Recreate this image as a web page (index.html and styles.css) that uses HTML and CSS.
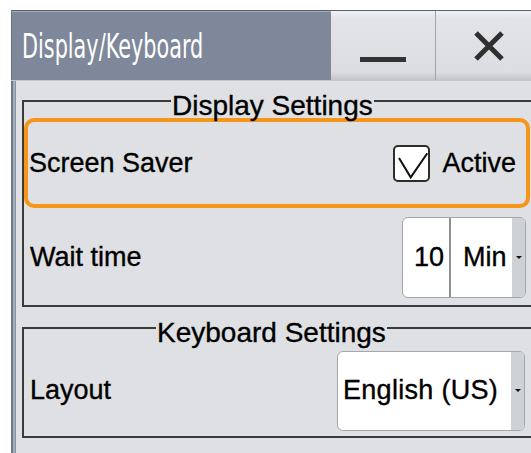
FILE: index.html
```html
<!DOCTYPE html>
<html lang="en">
<head>
<meta charset="utf-8">
<title>Display/Keyboard</title>
<link rel="stylesheet" href="styles.css">
</head>
<body>
<div class="window">
  <header class="titlebar">
    <h1 class="title"><span class="title-text">Display/Keyboard</span></h1>
    <button class="tb-btn" type="button" aria-label="Minimize"><span class="dash"></span></button>
    <button class="tb-btn tb-close" type="button" aria-label="Close">
      <svg width="32" height="32" viewBox="0 0 32 32"><path d="M3 3 L29 29 M29 3 L3 29" fill="none" stroke="#2f2f2f" stroke-width="5"/></svg>
    </button>
  </header>
  <main class="content">
    <section class="group group-display">
      <h2 class="group-title">Display Settings</h2>
      <div class="row row-focus">
        <span class="label">Screen Saver</span>
        <label class="check">
          <span class="box"><svg width="33" height="33" viewBox="0 0 33 33"><polyline points="4,11 15.7,30.3 32.3,6.3" fill="none" stroke="#111" stroke-width="2"/></svg></span>
          <span class="check-text">Active</span>
        </label>
      </div>
      <div class="row row-wait">
        <span class="label">Wait time</span>
        <div class="field spin">
          <span class="cell value">10</span>
          <span class="cell unit">Min</span>
          <span class="arrow"></span>
        </div>
      </div>
    </section>
    <section class="group group-keyboard">
      <h2 class="group-title">Keyboard Settings</h2>
      <div class="row row-layout">
        <span class="label">Layout</span>
        <div class="field combo">
          <span class="cell choice">English (US)</span>
          <span class="arrow"></span>
        </div>
      </div>
    </section>
  </main>
</div>
</body>
</html>
```
FILE: styles.css
```css
* { box-sizing: border-box; }

html, body { margin: 0; }

body {
  width: 531px;
  height: 453px;
  overflow: hidden;
  background: #fff;
  color: #000;
  font-family: "Liberation Sans", Arial, sans-serif;
}

.window {
  width: 531px;
  margin: 10px 0 0 11px;
}

/* ---- title bar ---- */
.titlebar {
  display: flex;
  height: 70px;
  border-top: 1px solid #59606c;
}

.title {
  flex: 0 0 320px;
  margin: 0;
  display: flex;
  align-items: center;
  padding-left: 10px;
  background: #7e889a;
  border-top: 1px solid #a6aebb;
  border-left: 1px solid #6a7384;
  color: #fff;
  font-family: "DejaVu Sans", sans-serif;
  font-stretch: condensed;
  font-weight: 400;
  font-size: 34px;
}

.title-text {
  display: inline-block;
  white-space: nowrap;
  transform: scaleX(0.68);
  transform-origin: left center;
}

.tb-btn {
  flex: 0 0 104px;
  height: 100%;
  margin: 0;
  padding: 0;
  border: 0;
  display: flex;
  align-items: center;
  justify-content: center;
  background: linear-gradient(#f1f2f4, #e3e4e7 10%, #dcdde0 88%, #c3c5ca);
}

.tb-close {
  flex-basis: 107px;
  border-left: 1px solid #9fa2a8;
}

.dash {
  width: 46px;
  height: 5px;
  margin-top: 27px;
  background: #333;
}

/* ---- client area ---- */
.content {
  height: 373px;
  padding-left: 5px;
  border-top: 1px solid #c1c4ca;
  background: linear-gradient(to right, #6f788a 0 2px, #a7aebb 2px 4px, #8891a2 4px 5px, #dfe0e4 5px);
}

.group {
  width: 520px;
  margin: 19px 0 0 6px;
  border: 2px solid #3a3a3a;
}

.group-keyboard { margin-top: 20px; }

.group-title,
.row {
  -webkit-text-stroke: 0.35px currentColor;
}

.group-title {
  display: table;
  margin: -8px 0 0 147px;
  padding: 0 1px;
  background: #dfe0e4;
  font-size: 28px;
  font-weight: 400;
  line-height: 24px;
}

.group-keyboard .group-title { margin-left: 132px; }

.row {
  display: flex;
  align-items: center;
  justify-content: space-between;
  font-size: 27px;
}

.row-focus {
  height: 90px;
  margin-right: 10px;
  padding: 0 10px 0 1px;
  border: 4px solid #f5961a;
  border-radius: 10px;
}

.row-wait {
  height: 97px;
  padding: 1px 14px 0 6px;
}

.row-layout {
  height: 91px;
  padding: 0 15px 0 6px;
}

.check {
  display: flex;
  align-items: center;
  gap: 12px;
}

.box {
  display: block;
  width: 37px;
  height: 37px;
  border: 2px solid #2d2d2d;
  border-radius: 5px;
  background: #fff;
}

.box svg { display: block; }

.field {
  display: flex;
  background: #fff;
  border: 1px solid #a3a6ab;
  border-radius: 6px;
  overflow: hidden;
}

.spin { width: 124px; height: 81px; }
.combo { width: 188px; height: 80px; }

.cell {
  display: flex;
  align-items: center;
}

.value {
  width: 48px;
  justify-content: flex-end;
  padding-right: 5px;
  border-right: 2px solid #8e9095;
}

.unit {
  flex: 1;
  padding-left: 12px;
}

.choice {
  flex: 1;
  padding-left: 5px;
  letter-spacing: 0.3px;
}

.arrow {
  flex: 0 0 13px;
  display: flex;
  align-items: center;
  justify-content: center;
  background: #cfd2d5;
}

.arrow::before {
  content: "";
  border-left: 3px solid transparent;
  border-right: 3px solid transparent;
  border-top: 3px solid #111;
  -webkit-text-stroke: 0;
}
```
